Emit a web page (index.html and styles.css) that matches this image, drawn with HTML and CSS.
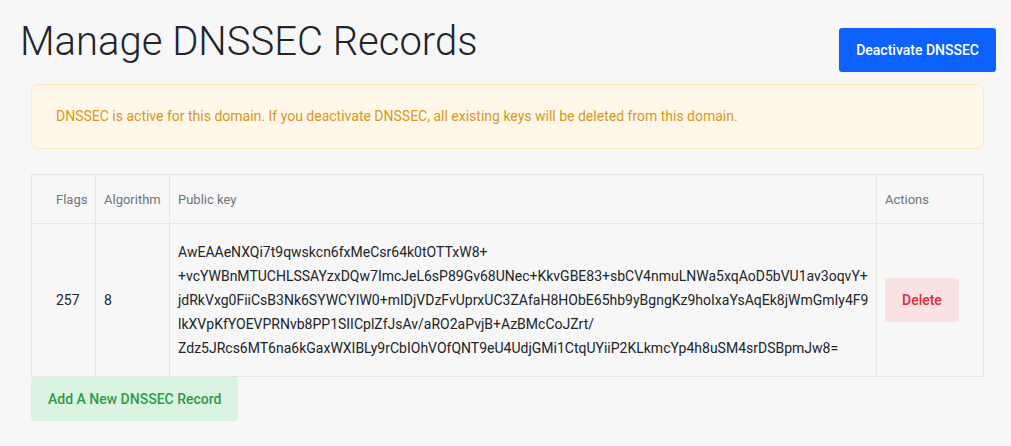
FILE: index.html
```html
<!DOCTYPE html>
<html>

<head>
  <title>Manage DNSSEC Records</title>
  <link rel="stylesheet" href="styles.css">
</head>

<body>
  <div class="page-header">
    <h1>Manage DNSSEC Records</h1>
    <button class="btn btn-primary">Deactivate DNSSEC</button>
  </div>

  <div class="content">
    <div class="alert">
      DNSSEC is active for this domain. If you deactivate DNSSEC, all existing keys will be deleted from this domain.
    </div>

    <table class="records">
      <colgroup>
        <col class="col-flags">
        <col class="col-algorithm">
        <col class="col-key">
        <col class="col-actions">
      </colgroup>
      <thead>
        <tr>
          <th class="first">Flags</th>
          <th>Algorithm</th>
          <th>Public key</th>
          <th>Actions</th>
        </tr>
      </thead>
      <tbody>
        <tr>
          <td class="first">257</td>
          <td>8</td>
          <td class="key">AwEAAeNXQi7t9qwskcn6fxMeCsr64k0tOTTxW8+<br>+vcYWBnMTUCHLSSAYzxDQw7ImcJeL6sP89Gv68UNec+KkvGBE83+sbCV4nmuLNWa5xqAoD5bVU1av3oqvY+<br>jdRkVxg0FiiCsB3Nk6SYWCYIW0+mIDjVDzFvUprxUC3ZAfaH8HObE65hb9yBgngKz9hoIxaYsAqEk8jWmGmIy4F9<br>lkXVpKfYOEVPRNvb8PP1SIICplZfJsAv/aRO2aPvjB+AzBMcCoJZrt/<br>Zdz5JRcs6MT6na6kGaxWXIBLy9rCbIOhVOfQNT9eU4UdjGMi1CtqUYiiP2KLkmcYp4h8uSM4srDSBpmJw8=</td>
          <td><button class="btn btn-danger">Delete</button></td>
        </tr>
      </tbody>
    </table>

    <button class="btn btn-success">Add A New DNSSEC Record</button>
  </div>
</body>

</html>
```

FILE: styles.css
```css
body {
  margin: 0;
  background-color: #f7f7f7;
  font-family: Roboto, "Liberation Sans", sans-serif;
  color: #212529;
}

.page-header {
  display: flex;
  justify-content: space-between;
  align-items: flex-start;
  padding: 18px 15px 0 20px;
}

.page-header h1 {
  margin: 0;
  font-size: 40px;
  font-weight: 300;
  line-height: 48px;
}

.page-header .btn {
  margin-top: 10px;
}

.content {
  margin: 12px 27px 0 31px;
}

.alert {
  padding: 23px 24px;
  font-size: 14px;
  line-height: 17px;
  color: #d6991b;
  background-color: #fff7ea;
  border: 1px solid #ffe9bf;
  border-radius: 6px;
}

.records {
  width: 100%;
  margin-top: 25px;
  border-collapse: collapse;
  table-layout: fixed;
  font-size: 14px;
}

.col-flags {
  width: 64px;
}

.col-algorithm {
  width: 74px;
}

.col-actions {
  width: 107px;
}

.records th,
.records td {
  border: 1px solid #e6e6e6;
  padding: 0 8px;
  text-align: left;
  vertical-align: middle;
}

.records th {
  height: 48px;
  font-size: 13px;
  font-weight: 400;
  color: #6c757d;
}

.records td {
  padding-top: 16px;
  padding-bottom: 16px;
  line-height: 24px;
}

.records .first {
  padding-left: 24px;
}

.records td.key {
  white-space: nowrap;
}

.btn {
  height: 44px;
  padding: 0 17px;
  border: none;
  border-radius: 3px;
  font-family: Roboto, "Liberation Sans", sans-serif;
  font-size: 14px;
  font-weight: 500;
  cursor: pointer;
}

.btn-primary {
  background-color: #0d62fe;
  color: white;
}

.btn-danger {
  background-color: #fae1e3;
  color: #e0293b;
}

.btn-success {
  display: block;
  background-color: #dbf4e1;
  color: #2b9c4c;
}
```
